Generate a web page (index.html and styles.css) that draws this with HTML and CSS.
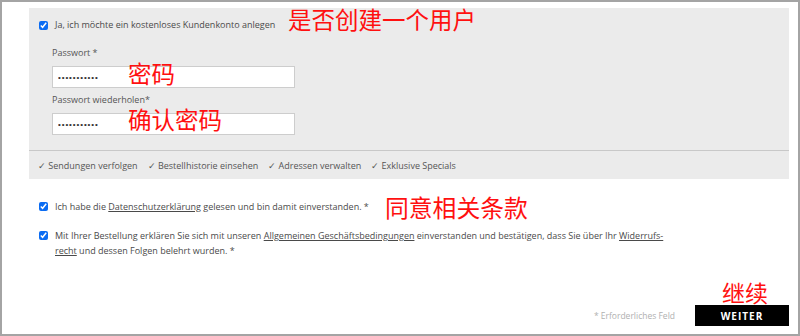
FILE: index.html
```html
<!DOCTYPE html>
<html lang="de">
  <head>
    <meta charset="UTF-8" />
    <meta name="viewport" content="width=device-width, initial-scale=1.0" />
    <title>Kundenkonto</title>
    <link rel="stylesheet" href="styles.css">
  </head>
  <body>
    <div class="frame">
      <div class="panel">
        <div class="account">
          <label class="checkrow">
            <input type="checkbox" checked />
            <span>Ja, ich möchte ein kostenloses Kundenkonto anlegen</span>
          </label>
          <div class="field">
            <div class="fieldlabel">Passwort *</div>
            <input class="pw" type="password" value="xxxxxxxxxxx" />
          </div>
          <div class="field second">
            <div class="fieldlabel">Passwort wiederholen*</div>
            <input class="pw" type="password" value="xxxxxxxxxxx" />
          </div>
        </div>
        <div class="perks">
          <span>&#10003; Sendungen verfolgen</span>
          <span>&#10003; Bestellhistorie einsehen</span>
          <span>&#10003; Adressen verwalten</span>
          <span>&#10003; Exklusive Specials</span>
        </div>
      </div>

      <div class="consent">
        <label class="checkrow">
          <input type="checkbox" checked />
          <span>Ich habe die <a href="#">Datenschutzerklärung</a> gelesen und bin damit einverstanden. *</span>
        </label>
        <label class="checkrow second">
          <input type="checkbox" checked />
          <span>Mit Ihrer Bestellung erklären Sie sich mit unseren <a href="#">Allgemeinen Geschäftsbedingungen</a> einverstanden und bestätigen, dass Sie über Ihr <a href="#">Widerrufs-</a><br><a href="#">recht</a> und dessen Folgen belehrt wurden. *</span>
        </label>
      </div>

      <div class="footer">
        <span class="required">* Erforderliches Feld</span>
        <button class="next">WEITER</button>
      </div>

      <span class="note n1">是否创建一个用户</span>
      <span class="note n2">密码</span>
      <span class="note n3">确认密码</span>
      <span class="note n4">同意相关条款</span>
      <span class="note n5">继续</span>
    </div>
  </body>
</html>
```

FILE: styles.css
```css
body {
  margin: 0;
  background-color: white;
  font-family: "Open Sans", "Liberation Sans", sans-serif;
  color: #4a4a4a;
}
.frame {
  position: relative;
  box-sizing: border-box;
  width: 800px;
  height: 336px;
  border: 2px solid #a4a4a4;
  padding: 6px 9px 0 27px;
}
.panel {
  background-color: #ebebeb;
}
.account {
  padding: 10px 0 15px 10px;
}
.checkrow {
  display: flex;
  align-items: flex-start;
  font-size: 9px;
  line-height: 14px;
}
.checkrow input {
  width: 9px;
  height: 9px;
  margin: 3px 7px 0 0;
  accent-color: #0b6cf2;
  flex: none;
}
.field {
  margin: 15px 0 0 13px;
}
.field.second {
  margin-top: 6px;
}
.fieldlabel {
  font-size: 9px;
  line-height: 12px;
  color: #555;
}
.pw {
  display: block;
  box-sizing: border-box;
  width: 243px;
  height: 22px;
  margin-top: 7px;
  padding: 0 5px;
  border: 1px solid #cdcdcd;
  background-color: white;
  font-size: 8px;
  letter-spacing: 0.9px;
  color: #333;
}
.field.second .pw {
  margin-top: 7px;
}
.perks {
  display: flex;
  gap: 10px;
  height: 28px;
  align-items: center;
  padding-left: 9px;
  border-top: 1px solid #c8c8c8;
  font-size: 9px;
  color: #555;
}
.consent {
  padding: 20px 0 0 10px;
}
.consent .checkrow {
  line-height: 15px;
}
.consent .checkrow input {
  margin-top: 3px;
}
.consent .checkrow.second {
  margin-top: 14px;
}
.consent a {
  color: #4a4a4a;
}
.footer {
  display: flex;
  justify-content: flex-end;
  align-items: center;
  gap: 20px;
  margin-top: 47px;
}
.required {
  font-size: 8.5px;
  color: #b0b0b0;
}
.next {
  width: 94px;
  height: 21px;
  border: none;
  background-color: black;
  color: white;
  font-family: "Open Sans", "Liberation Sans", sans-serif;
  font-weight: bold;
  font-size: 10px;
  letter-spacing: 1px;
}
.note {
  position: absolute;
  font-family: "Noto Sans CJK SC", sans-serif;
  font-size: 23.5px;
  line-height: 1;
  color: #ff1010;
  white-space: nowrap;
}
.n1 {
  left: 286px;
  top: 6px;
}
.n2 {
  left: 126px;
  top: 60px;
}
.n3 {
  left: 126px;
  top: 106px;
}
.n4 {
  left: 383px;
  top: 193px;
  font-size: 23.8px;
}
.n5 {
  left: 720px;
  top: 279px;
  font-size: 23px;
}
```
